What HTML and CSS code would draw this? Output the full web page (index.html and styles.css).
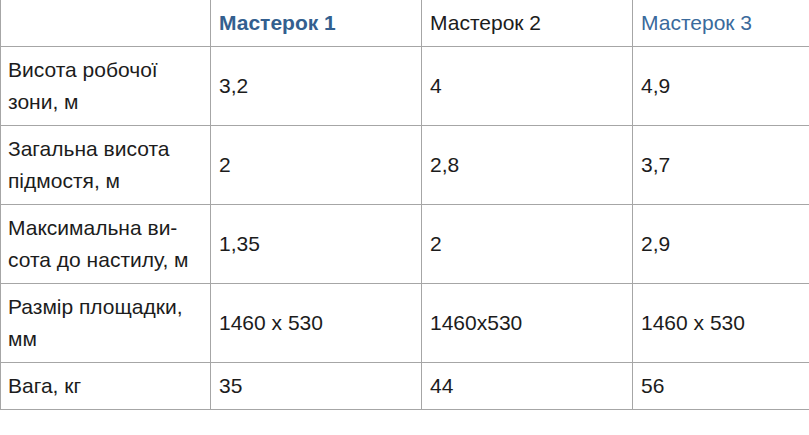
FILE: index.html
```html
<!DOCTYPE html>
<html lang="uk">
<head>
<meta charset="utf-8">
<title>Мастерок</title>
<link rel="stylesheet" href="styles.css">
</head>
<body>
<table class="spec">
  <colgroup>
    <col class="c1"><col class="c2"><col class="c3"><col class="c4">
  </colgroup>
  <thead>
    <tr>
      <th></th>
      <th class="link bold">Мастерок 1</th>
      <th>Мастерок 2</th>
      <th class="link">Мастерок 3</th>
    </tr>
  </thead>
  <tbody>
    <tr><td>Висота робочої зони, м</td><td>3,2</td><td>4</td><td>4,9</td></tr>
    <tr><td>Загальна висота підмостя, м</td><td>2</td><td>2,8</td><td>3,7</td></tr>
    <tr><td>Максимальна ви-<br>сота до настилу, м</td><td>1,35</td><td>2</td><td>2,9</td></tr>
    <tr><td>Размір площадки, мм</td><td>1460 x 530</td><td>1460x530</td><td>1460 x 530</td></tr>
    <tr><td>Вага, кг</td><td>35</td><td>44</td><td>56</td></tr>
  </tbody>
</table>
</body>
</html>
```
FILE: styles.css
```css
html, body {
  margin: 0;
  padding: 0;
  background: #ffffff;
  overflow: hidden;
}
body {
  font-family: "Liberation Sans", Arial, sans-serif;
  font-size: 21px;
  color: #1c1c1c;
}
.spec {
  border-collapse: collapse;
  table-layout: fixed;
  width: 844px;
  margin-top: -1px;
}
.c1 { width: 210px; }
.c2 { width: 211px; }
.c3 { width: 211px; }
.c4 { width: 212px; }
.spec th,
.spec td {
  border: 1px solid #a6a6a6;
  padding: 7px 8px 7px 7px;
  line-height: 32px;
  text-align: left;
  vertical-align: middle;
  font-weight: normal;
}
.spec td + td,
.spec th + th { padding-left: 8px; }
.spec th.link { color: #3a6a9c; }
.spec th.bold { font-weight: bold; color: #335f8f; }
```
